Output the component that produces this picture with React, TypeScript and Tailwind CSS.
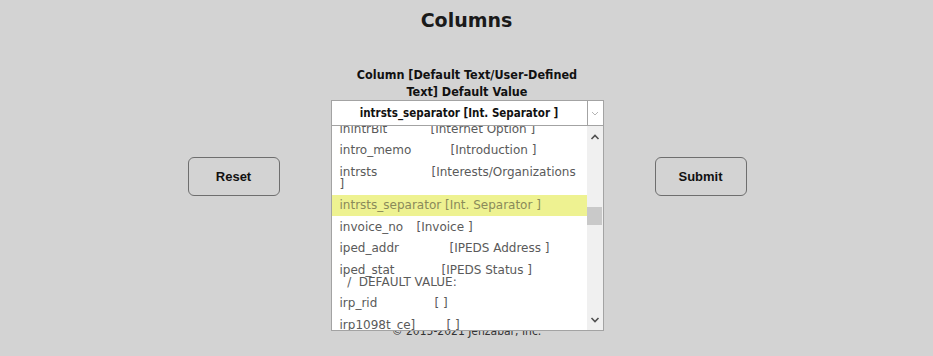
const gothic = "font-['DejaVu_Sans',sans-serif]";
const narrow = "font-['DejaVu_Sans_Condensed','DejaVu_Sans',sans-serif]";

type Row = {
  name: string;
  label: string;
  pad: string;
  extra?: string;
  active?: boolean;
};

const rows: Row[] = [
  { name: "inintrBit", label: "[Internet Option ]", pad: "w-[91px]" },
  { name: "intro_memo", label: "[Introduction ]", pad: "w-[111px]" },
  { name: "intrsts", label: "[Interests/Organizations", pad: "w-[92px]", extra: "]" },
  { name: "intrsts_separator", label: "[Int. Separator ]", pad: "w-[101px]", active: true },
  { name: "invoice_no", label: "[Invoice ]", pad: "w-[77px]" },
  { name: "iped_addr", label: "[IPEDS Address ]", pad: "w-[110px]" },
  { name: "iped_stat", label: "[IPEDS Status ]", pad: "w-[102px]", extra: "\u00a0\u00a0/\u00a0\u00a0DEFAULT VALUE:" },
  { name: "irp_rid", label: "[ ]", pad: "w-[95px]" },
  { name: "irp1098t_ce]", label: "[ ]", pad: "w-[107px]" },
];

function Dropdown() {
  return (
    <div className="absolute left-0 top-full z-10 flex h-[205px] w-full overflow-hidden border border-t-0 border-[#a3a3a3] bg-white">
      <div className="flex-1 overflow-hidden">
        <ul className="-mt-[8px]">
          {rows.map((r) => (
            <li
              key={r.name}
              className={`py-[4.75px] pl-[8px] text-[12px] leading-[12px] ${
                r.active ? "bg-[#eef291] text-[#8a8a5a]" : "text-[#5a5a5a]"
              }`}
            >
              <div className="flex whitespace-nowrap">
                <span className={r.active ? "" : `inline-block ${r.pad}`}>{r.name}</span>
                {r.active && <span>&nbsp;</span>}
                <span>{r.label}</span>
              </div>
              {r.extra && <div className="whitespace-pre">{r.extra}</div>}
            </li>
          ))}
        </ul>
      </div>
      <div className="flex w-[16px] flex-col items-center bg-[#f0f0f0]">
        <svg className="mt-[7px] h-[8px] w-[10px]" viewBox="0 0 10 8" fill="none">
          <path d="M1.5 6 L5 2.5 L8.5 6" stroke="#505050" strokeWidth="1.6" />
        </svg>
        <div className="mt-[66px] h-[18px] w-[15px] bg-[#c9c9c9]" />
        <svg className="mt-auto mb-[6px] h-[8px] w-[10px]" viewBox="0 0 10 8" fill="none">
          <path d="M1.5 2 L5 5.5 L8.5 2" stroke="#505050" strokeWidth="1.6" />
        </svg>
      </div>
    </div>
  );
}

function Btn({ children }: { children: string }) {
  return (
    <button className="mt-[125px] h-[39px] w-[92px] rounded-[6px] border border-[#6e6e6e] font-['Liberation_Sans',Arial,sans-serif] text-[13px] font-bold text-[#111]">
      {children}
    </button>
  );
}

export default function App() {
  return (
    <div className={`h-[356px] w-full overflow-hidden bg-[#d3d3d3] ${gothic}`}>
      <h1 className="pt-[8px] text-center text-[19px] leading-[24px] font-bold text-[#1a1a1a]">
        Columns
      </h1>

      <div className="flex justify-center gap-[51px] pl-[1px]">
        <Btn>Reset</Btn>

        <div className="mt-[34px] w-[273px]">
          <label className={`mx-auto block w-[245px] text-center text-[12.5px] leading-[17px] font-bold text-[#111] ${narrow}`}>
            Column [Default Text/User-Defined Text] Default Value
          </label>
          <div className="relative">
            <div className="flex h-[26px] border border-[#a3a3a3] bg-white">
              <div className={`flex flex-1 items-center justify-center pt-[1px] text-[11.5px] font-bold text-[#111] ${narrow}`}>
                intrsts_separator [Int. Separator ]
              </div>
              <div className="flex w-[16px] items-center justify-center border-l border-[#a3a3a3]">
                <svg className="h-[5px] w-[8px]" viewBox="0 0 8 5" fill="none">
                  <path d="M1 1 L4 4 L7 1" stroke="#b5b5b5" strokeWidth="1" />
                </svg>
              </div>
            </div>
            <Dropdown />
          </div>
        </div>

        <Btn>Submit</Btn>
      </div>

      <p className={`mt-[127px] text-center text-[12px] leading-[16px] text-[#333] ${narrow}`}>
        © 2015-2021 Jenzabar, Inc.
      </p>
    </div>
  );
}
